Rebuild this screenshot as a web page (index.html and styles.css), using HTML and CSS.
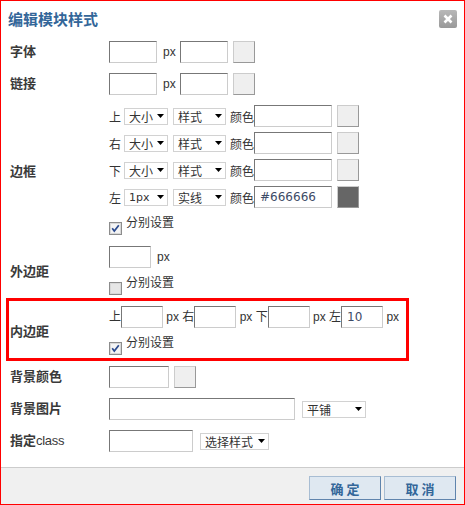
FILE: index.html
```html
<!DOCTYPE html>
<html lang="zh-CN">
<head>
<meta charset="utf-8">
<title>编辑模块样式</title>
<link rel="stylesheet" href="styles.css">
</head>
<body>
<div class="dialog">
  <div class="header">
    <h1 class="title">编辑模块样式</h1>
    <button class="close" type="button" aria-label="关闭">
      <svg width="18" height="18" viewBox="0 0 18 18"><defs><linearGradient id="cg" x1="0" y1="0" x2="0" y2="1"><stop offset="0" stop-color="#b8b8b8"/><stop offset="1" stop-color="#999"/></linearGradient></defs><rect x="0" y="0" width="18" height="18" rx="2" fill="url(#cg)"/><path d="M5.5 5.5L12.5 12.5M12.5 5.5L5.5 12.5" stroke="#fff" stroke-width="2.6"/></svg>
    </button>
  </div>

  <div class="form">
    <div class="row">
      <div class="label">字体</div>
      <div class="field">
        <div class="line">
          <input class="txt w48" type="text"><span class="unit">px</span><input class="txt w48" type="text"><span class="swatch"></span>
        </div>
      </div>
    </div>

    <div class="row">
      <div class="label">链接</div>
      <div class="field">
        <div class="line">
          <input class="txt w48" type="text"><span class="unit">px</span><input class="txt w48" type="text"><span class="swatch"></span>
        </div>
      </div>
    </div>

    <div class="row tight">
      <div class="label">边框</div>
      <div class="field">
        <div class="line">
          <span class="side">上</span>
          <span class="select s44"><span>大小</span><svg width="7" height="4"><path d="M0 0h7L3.5 4z"/></svg></span>
          <span class="select s53"><span>样式</span><svg width="7" height="4"><path d="M0 0h7L3.5 4z"/></svg></span>
          <span class="clabel">颜色</span><input class="txt w78" type="text"><span class="swatch"></span>
        </div>
        <div class="line">
          <span class="side">右</span>
          <span class="select s44"><span>大小</span><svg width="7" height="4"><path d="M0 0h7L3.5 4z"/></svg></span>
          <span class="select s53"><span>样式</span><svg width="7" height="4"><path d="M0 0h7L3.5 4z"/></svg></span>
          <span class="clabel">颜色</span><input class="txt w78" type="text"><span class="swatch"></span>
        </div>
        <div class="line">
          <span class="side">下</span>
          <span class="select s44"><span>大小</span><svg width="7" height="4"><path d="M0 0h7L3.5 4z"/></svg></span>
          <span class="select s53"><span>样式</span><svg width="7" height="4"><path d="M0 0h7L3.5 4z"/></svg></span>
          <span class="clabel">颜色</span><input class="txt w78" type="text"><span class="swatch"></span>
        </div>
        <div class="line">
          <span class="side">左</span>
          <span class="select s44"><span class="num">1px</span><svg width="7" height="4"><path d="M0 0h7L3.5 4z"/></svg></span>
          <span class="select s53"><span>实线</span><svg width="7" height="4"><path d="M0 0h7L3.5 4z"/></svg></span>
          <span class="clabel">颜色</span><input class="txt w78" type="text" value="#666666"><span class="swatch dark"></span>
        </div>
        <label class="line cbline">
          <svg class="cb" width="13" height="13" viewBox="0 0 13 13"><rect x="0.5" y="0.5" width="12" height="12" fill="#f4f4f4" stroke="#8c8c8c"/><rect x="1.5" y="1.5" width="10" height="10" fill="none" stroke="#d8d8d8"/><path d="M3.2 6.2L5.3 9L9.8 3.2" fill="none" stroke="#2b4a8e" stroke-width="1.7"/></svg>分别设置
        </label>
      </div>
    </div>

    <div class="row tight">
      <div class="label">外边距</div>
      <div class="field">
        <div class="line">
          <input class="txt w42" type="text"><span class="unit">px</span>
        </div>
        <label class="line cbline">
          <svg class="cb" width="13" height="13" viewBox="0 0 13 13"><rect x="0.5" y="0.5" width="12" height="12" fill="#f4f4f4" stroke="#8c8c8c"/><rect x="1.5" y="1.5" width="10" height="10" fill="#e6e6e6" stroke="#d8d8d8"/></svg>分别设置
        </label>
      </div>
    </div>

    <div class="row tight marked">
      <div class="label">内边距</div>
      <div class="field">
        <div class="line inline">上<input class="txt w42" type="text"> px 右<input class="txt w42" type="text"> px 下<input class="txt w42" type="text"> px 左<input class="txt w42" type="text" value="10"> px</div>
        <label class="line cbline">
          <svg class="cb" width="13" height="13" viewBox="0 0 13 13"><rect x="0.5" y="0.5" width="12" height="12" fill="#f4f4f4" stroke="#8c8c8c"/><rect x="1.5" y="1.5" width="10" height="10" fill="none" stroke="#d8d8d8"/><path d="M3.2 6.2L5.3 9L9.8 3.2" fill="none" stroke="#2b4a8e" stroke-width="1.7"/></svg>分别设置
        </label>
      </div>
    </div>

    <div class="row">
      <div class="label">背景颜色</div>
      <div class="field">
        <div class="line">
          <input class="txt w60" type="text"><span class="swatch"></span>
        </div>
      </div>
    </div>

    <div class="row">
      <div class="label">背景图片</div>
      <div class="field">
        <div class="line">
          <input class="txt w186" type="text">
          <span class="select s64 gap7"><span>平铺</span><svg width="7" height="4"><path d="M0 0h7L3.5 4z"/></svg></span>
        </div>
      </div>
    </div>

    <div class="row">
      <div class="label">指定<span class="latin">class</span></div>
      <div class="field">
        <div class="line">
          <input class="txt w84" type="text">
          <span class="select s69 gap7"><span>选择样式</span><svg width="7" height="4"><path d="M0 0h7L3.5 4z"/></svg></span>
        </div>
      </div>
    </div>
  </div>

  <div class="footer">
    <button class="btn" type="button">确 定</button>
    <button class="btn" type="button">取 消</button>
  </div>
</div>
</body>
</html>
```

FILE: styles.css
```css
*, *::before, *::after { box-sizing: border-box; }

body {
  margin: 0;
  font: 12px "Liberation Sans", "Noto Sans CJK SC", sans-serif;
  color: #333;
  background: #fff;
}

.dialog {
  width: 465px;
  height: 505px;
  border: 1px solid #f00;
  display: flex;
  flex-direction: column;
  background: #fff;
}

.header {
  height: 35px;
  display: flex;
  align-items: center;
  justify-content: space-between;
  padding: 0 7px 0 7px;
}

.title {
  margin: 0;
  font: bold 15px "Noto Sans CJK SC", sans-serif;
  line-height: 35px;
  color: #336699;
}

.close {
  width: 18px;
  height: 18px;
  padding: 0;
  border: 0;
  background: none;
  display: block;
}
.close svg { display: block; }

.form { padding-left: 9px; }

.row {
  display: grid;
  grid-template-columns: 99px auto;
  padding: 5px 0;
  position: relative;
}
.row.tight { padding-bottom: 3px; }

.marked::after {
  content: "";
  position: absolute;
  left: -4px;
  top: -3px;
  width: 403px;
  height: 63px;
  border: 3px solid #f00;
  pointer-events: none;
}

.label {
  align-self: center;
  font: bold 13px "Liberation Sans", "Noto Sans CJK SC", sans-serif;
  color: #3a3a3a;
  line-height: 16px;
}
.label .latin {
  font-weight: normal;
  font-size: 13px;
  letter-spacing: -0.3px;
}

.field {
  display: flex;
  flex-direction: column;
  gap: 5px;
}

.line {
  display: flex;
  align-items: center;
  height: 22px;
  white-space: pre;
}
.line.inline { display: block; line-height: 22px; }
.line.inline .txt { vertical-align: top; }

.cbline {
  height: 20px;
  margin-top: 5px;
}
.cb { margin-right: 4px; flex: none; }

.txt {
  height: 22px;
  border: 1px solid;
  border-color: #777 #ccc #ccc #777;
  padding: 0 5px;
  margin: 0;
  font: 12px "DejaVu Sans", sans-serif;
  color: #3d4a66;
  background: #fff;
  outline: none;
}
.w42 { width: 42px; }
.w48 { width: 48px; }
.w60 { width: 60px; }
.w78 { width: 78px; }
.w84 { width: 84px; }
.w186 { width: 186px; }

.unit { margin: 0 4px 0 6px; }

.swatch {
  width: 22px;
  height: 22px;
  margin-left: 5px;
  background: #efefef;
  border: 1px solid;
  border-color: #ccc #999 #999 #ccc;
}
.swatch.dark { background: #666; }

.side { margin-right: 3px; }
.clabel { margin-left: 4px; }

.select {
  display: inline-flex;
  align-items: center;
  justify-content: space-between;
  height: 17px;
  border: 1px solid #d2d2d2;
  padding: 0 3px 0 4px;
  background: #fff;
  color: #333;
}
.select svg { display: block; fill: #000; }
.select .num { font-family: "DejaVu Sans", sans-serif; font-size: 11px; }
.s44 { width: 44px; }
.s53 { width: 53px; margin-left: 5px; }
.s64 { width: 64px; }
.s69 { width: 69px; }
.gap7 { margin-left: 7px; }

.footer {
  margin-top: auto;
  height: 37px;
  border-top: 1px solid #ccc;
  background: #f0f0f0;
  display: flex;
  justify-content: flex-end;
  gap: 3px;
  padding: 8px 8px 0 0;
}

.btn {
  width: 72px;
  height: 24px;
  padding: 0;
  border: 1px solid;
  border-color: #a8bdd3 #5f84ad #5f84ad #a8bdd3;
  background: #dfe8f1;
  font: bold 13px "Noto Sans CJK SC", sans-serif;
  color: #336699;
}
```
